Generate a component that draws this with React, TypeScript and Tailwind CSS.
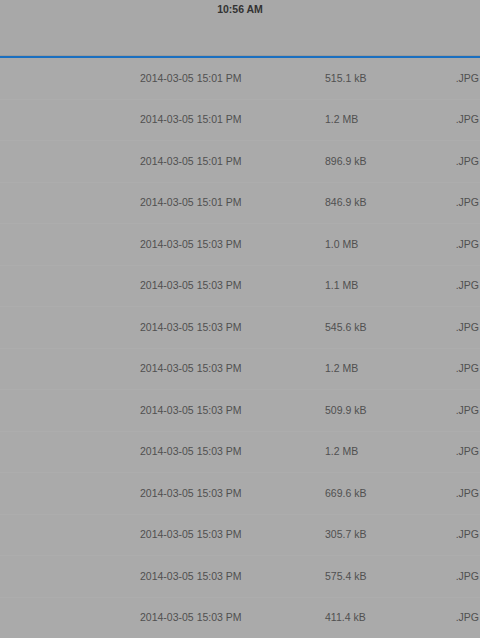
import React from 'react';

const rows = [
  { date: '2014-03-05 15:01 PM', size: '515.1 kB' },
  { date: '2014-03-05 15:01 PM', size: '1.2 MB' },
  { date: '2014-03-05 15:01 PM', size: '896.9 kB' },
  { date: '2014-03-05 15:01 PM', size: '846.9 kB' },
  { date: '2014-03-05 15:03 PM', size: '1.0 MB' },
  { date: '2014-03-05 15:03 PM', size: '1.1 MB' },
  { date: '2014-03-05 15:03 PM', size: '545.6 kB' },
  { date: '2014-03-05 15:03 PM', size: '1.2 MB' },
  { date: '2014-03-05 15:03 PM', size: '509.9 kB' },
  { date: '2014-03-05 15:03 PM', size: '1.2 MB' },
  { date: '2014-03-05 15:03 PM', size: '669.6 kB' },
  { date: '2014-03-05 15:03 PM', size: '305.7 kB' },
  { date: '2014-03-05 15:03 PM', size: '575.4 kB' },
  { date: '2014-03-05 15:03 PM', size: '411.4 kB' },
];

export default function App() {
  return (
    <div className="w-[480px] h-[638px] overflow-hidden bg-[#aaaaaa] font-['Liberation_Sans',Arial,sans-serif]">
      {/* status bar + nav */}
      <div className="h-[56px] bg-[#a8a8a8] border-b border-[#9c9c9c]">
        <div className="h-[19px] flex items-center justify-center text-[10.5px] font-bold text-[#333333]">
          10:56 AM
        </div>
      </div>
      <div className="h-[2px] bg-[#1a6fc0]" />

      <div>
        {rows.map((r, i) => (
          <div
            key={i}
            className="h-[41.5px] pt-[1px] flex items-center border-b border-[#adadad] text-[10.5px] text-[#505050]"
          >
            <div className="w-[140px] shrink-0" />
            <div className="w-[185px] shrink-0">{r.date}</div>
            <div className="flex-1">{r.size}</div>
            <div className="pr-[1px]">.JPG</div>
          </div>
        ))}
      </div>
    </div>
  );
}
